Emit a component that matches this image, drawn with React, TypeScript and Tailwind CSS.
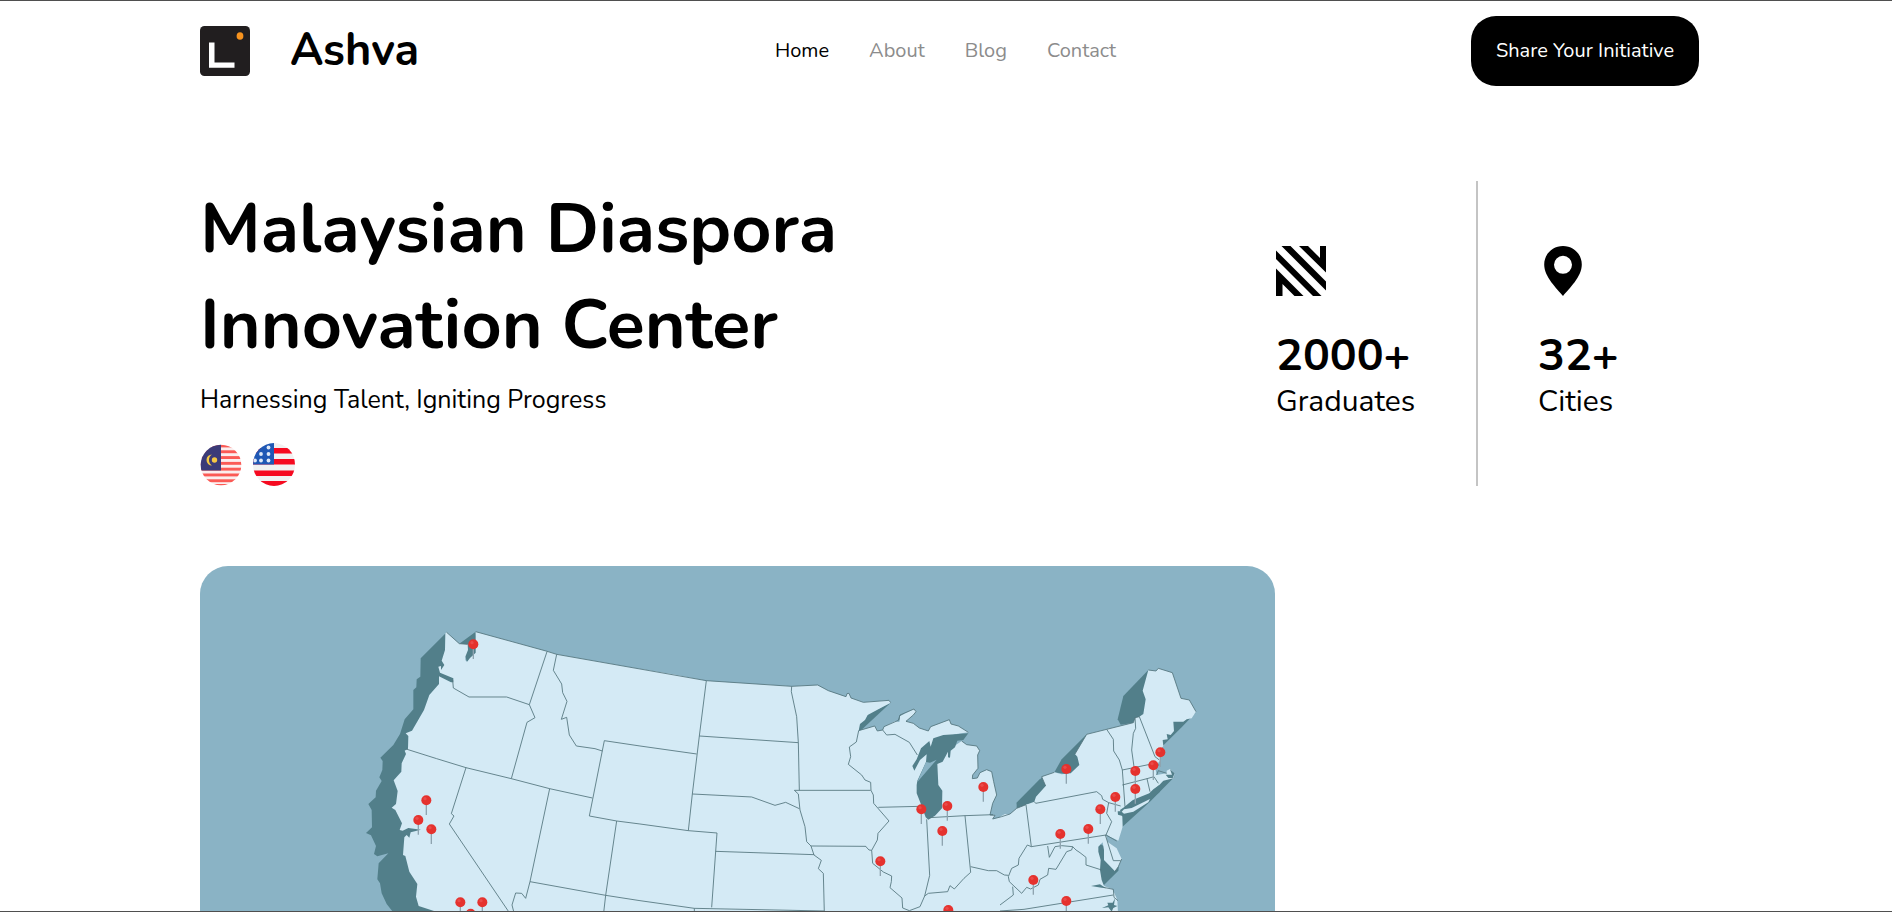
import React from "react";

type Group = {
  origin: string;
  shadow: string[];
  land: string[];
  water: string[];
  lines: string[];
  pins: [number, number][];
};

const west: Group = {
  origin: "translate(140 34) scale(0.33333)",
  shadow: [
    "320,97 242,175 241,230 230,238 229,262 220,270 220,328 194,358 180,402 160,435 121,473 128,483 127,510 118,532 125,543 108,572 107,592 85,612 95,630 96,682 78,699 93,706 108,738 102,762 112,769 145,760 116,790 112,838 120,850 125,880 140,912 162,940 320,940 320,700 300,400 345,260 345,150",
    "407,95 358,131 376,170 381,186 412,160",
  ],
  land: [
    "320,97 358,131 383,133 384,150 376,170 376,180 381,186 390,174 407,158 407,95 618,153 650,163 966,218 966,940 290,940 282,933 236,918 228,890 232,852 208,815 196,768 189,765 193,712 200,705 208,713 212,697 243,689 205,684 188,692 179,690 186,670 166,630 155,623 168,612 173,573 161,541 184,515 185,490 198,462 194,452 204,446 205,408 197,400 216,392 252,330 268,285 297,252 297,229 333,247 340,247 340,235 300,218 295,200 303,198 303,210 313,195 305,182 315,150 316,100",
  ],
  water: [],
  lines: [
    "338,240 340,264 387,291 500,291 568,314",
    "621,155 568,314 585,353 561,367 514,536",
    "198,447 290,476 378,503 514,536 629,566 757,594",
    "650,163 640,211 665,252 668,278 681,304 664,358 680,352 688,405 709,438 765,446 787,453",
    "900,438 793,422 748,648 830,663 900,672",
    "378,503 334,641 342,648 328,672 508,938",
    "629,566 570,845 557,895 545,880 527,879 516,915 522,938",
    "570,845 797,886 900,902",
    "830,663 797,886 791,938",
    "320,97 358,131 383,133",
    "407,95 618,153 650,163 900,207",
  ],
  pins: [[400, 133], [259, 601], [235, 660], [274, 688], [361, 907], [427, 907], [392, 941]],
};

const central: Group = {
  origin: "translate(440 54) scale(0.33333)",
  shadow: [],
  land: [
    "0,147 100,163 199,182 455,199 533,195 565,212 600,225 600,880 0,880",
  ],
  water: [],
  lines: [
    "0,147 199,182 455,199 533,195 565,212",
    "199,182 178,348 157,522 145,632",
    "455,199 454,215 470,290 475,368 478,511",
    "178,348 475,368",
    "0,378 170,402",
    "157,522 335,531 405,556 437,547 478,566",
    "692,511 463,511 475,522 480,570 495,620 500,665 513,678 522,705 544,721 535,746 550,760 553,880",
    "513,678 677,679",
    "227,694 522,704",
    "0,612 145,632 231,639 215,862",
    "0,842 163,865 553,873",
    "163,865 163,880",
  ],
  pins: [],
};

const lakes: Group = {
  origin: "translate(620 94) scale(0.33333)",
  shadow: ["212,128 143,162 116,190 116,214 124,210", "235,181 240,165 255,162 262,185", "660,357 590,428 590,448 660,440"],
  land: [
    "0,82 30,95 78,110 81,101 87,100 93,114 130,127 207,121 212,128 175,148 143,165 135,180 120,192 116,212 164,198 172,213 188,210 192,200 225,184 238,186 240,168 282,147 288,155 280,165 258,184 280,190 298,204 325,213 332,200 388,179 393,192 415,198 445,217 404,223 370,240 400,260 425,243 440,254 470,258 479,272 473,285 474,325 458,345 457,356 472,354 480,338 500,329 515,335 521,365 530,405 518,430 510,465 525,466 518,477 545,470 570,462 590,445 618,434 700,420 700,762 0,762",
  ],
  water: [
    "340,235 370,225 404,223 445,220 430,240 412,242 405,262 392,272 390,293 384,292 384,275 368,305 352,312 355,375 367,392 366,445 345,467 325,479 317,472 300,425 290,400 290,375 292,362 318,306 320,283 300,300 283,332 277,318 290,298 303,265 328,243 332,260",
  ],
  lines: [
    "25,92 78,110 81,101 87,100 93,114 130,127 207,121 212,128",
    "116,212 164,198 172,213 188,210 192,200 235,181 240,165 282,147 288,155 280,165 258,184 280,190 298,204 325,213 332,200 388,179 393,192 415,198 445,217",
    "425,243 440,254 470,258 479,272 473,285 474,325 458,345 457,356 472,354 480,338 500,329 515,335 521,365 530,405 518,430 510,465 525,466 518,477 545,470 570,462 590,445 618,434",
    "188,210 200,225 225,223 268,247 292,285",
    "116,212 109,246 88,261 92,290 85,313 125,345 135,360 152,367 153,391 160,405 161,430 207,483 174,520 172,540 155,571 158,610 190,636 215,648 214,665 210,683 246,714 248,744 268,752 300,740 314,708",
    "175,442 300,439",
    "136,558 147,570 155,571",
    "320,478 329,646 314,708 325,700 383,695 390,677 403,687 432,655 452,637 435,467",
    "328,473 435,467 519,464",
    "452,620 505,632 530,632 553,645 565,646",
  ],
  pins: [[490, 381], [382, 438], [304, 448], [367, 513], [181, 604], [385, 750]],
};

const east: Group = {
  origin: "translate(800 84) scale(0.33333)",
  shadow: [
    "445,60 370,138 353,208 362,224 400,218 440,190",
    "260,253 185,328 163,367 215,375 245,345",
    "130,378 50,458 52,470 78,466 110,458 142,408",
    "588,187 545,232 488,288 480,330 480,270 515,212",
    "524,380 450,455 370,528 340,560 350,480 440,425 500,385",
    "298,580 290,600 298,700 312,705 355,662 360,620",
  ],
  land: [
    "0,500 15,492 35,495 78,464 103,455 108,440 137,408 125,380 163,367 185,373 212,370 238,345 232,320 225,312 260,253 320,238 400,218 405,203 418,200 430,192 437,148 428,122 445,60 468,63 475,55 517,68 543,145 568,150 588,185 575,205 560,208 550,215 520,215 522,243 512,255 500,252 503,268 488,270 490,288 475,310 482,330 465,350 470,375 500,370 500,362 510,357 524,370 520,385 490,392 478,405 460,418 448,430 398,450 372,472 360,480 367,500 368,530 355,572 330,560 318,553 322,575 350,595 365,627 355,650 345,664 336,655 312,630 312,600 308,577 295,590 295,605 302,630 300,660 305,690 312,708 338,718 352,750 354,790 0,790",
  ],
  water: [
    "510,358 524,370 518,384 505,384 497,374 516,374",
    "372,472 398,458 440,440 450,430 478,405 480,425 450,450 400,470",
    "353,484 367,484 368,498 354,494",
    "273,708 300,703 318,715 305,713",
    "306,774 325,766 322,758 338,758 345,745 342,765 352,768 340,774 335,785 325,772",
  ],
  lines: [
    "137,408 125,380 163,367",
    "225,312 260,253 320,238 400,218 405,203 418,200",
    "445,60 468,63 475,55 517,68 543,145 568,150 588,185",
    "78,464 94,590 318,555",
    "103,455 107,460 290,425 305,437 308,448 326,458 320,490 335,515 318,555 350,573",
    "320,238 340,268 341,303 358,330 367,360 375,470",
    "326,458 362,468",
    "405,203 407,235 400,250 395,300 402,350",
    "367,360 450,343 478,345",
    "418,200 465,320 478,330",
    "367,405 441,386 462,380 475,400",
    "441,386 450,425",
    "316,555 340,632 362,632",
    "94,590 82,585 57,625 55,645 35,655 25,680 28,695 65,730 80,712 92,717 115,705 120,688 143,675 146,655 168,658 200,605 215,600 218,590",
    "143,588 148,622 165,590 185,587 218,590 228,600 240,608 258,622 258,645 305,660",
    "38,710 40,735 0,765",
    "0,783 72,778 340,735",
    "310,712 340,718 342,742 354,752",
    "365,627 355,650 345,664",
    "470,375 475,362 500,370",
  ],
  pins: [[481, 307], [460, 346], [406, 363], [406, 417], [199, 357], [346, 441], [301, 478], [265, 537], [181, 552], [100, 690], [199, 753]],
};

const groups = [west, central, lakes, east];

function UsMap() {
  return (
    <svg viewBox="0 0 1075 345" className="block h-[345px] w-[1075px]">
      {groups.map((g, i) => (
        <g key={i} transform={g.origin} fill="#527f8a">
          {g.shadow.map((p) => <polygon key={p} points={p} />)}
        </g>
      ))}
      {groups.map((g, i) => (
        <g key={i} transform={g.origin} fill="#d4eaf5">
          {g.land.map((p) => <polygon key={p} points={p} />)}
        </g>
      ))}
      {groups.map((g, i) => (
        <g key={i} transform={g.origin}>
          {g.water.map((p) => <polygon key={p} points={p} fill="#527f8a" />)}
        </g>
      ))}
      <polygon transform={lakes.origin} points="292,366 318,306 330,308 350,299" fill="#8ab3c5" />
      <polygon transform={east.origin} points="365,485 372,478 395,474 450,447 445,457 400,485 372,491" fill="#d4eaf5" />
      {groups.map((g, i) => (
        <g key={i} transform={g.origin} fill="none" stroke="#54757d" strokeWidth="2.6" strokeLinejoin="round">
          {g.lines.map((p) => <polyline key={p} points={p} />)}
        </g>
      ))}
      {groups.map((g, i) => (
        <g key={i} transform={g.origin}>
          {g.pins.map(([x, y]) => (
            <g key={`${x}-${y}`}>
              <path d={`M${x} ${y}v44`} stroke="#8fa4b0" strokeWidth="4" />
              <circle cx={x} cy={y} r="15" fill="#e5322e" />
              <circle cx={x - 4} cy={y - 5} r="5" fill="#ea4a49" />
            </g>
          ))}
        </g>
      ))}
    </svg>
  );
}

function Logo() {
  return (
    <svg viewBox="0 0 50 50" className="size-[50px]">
      <rect width="50" height="50" rx="4.5" fill="#211e1f" />
      <path d="M9 16.500h5.500v20h20v5.300H9z" fill="#fff" />
      <ellipse cx="40" cy="10" rx="3.400" ry="3.800" fill="#f7931e" />
    </svg>
  );
}

function MalaysiaFlag() {
  return (
    <svg viewBox="0 0 42 42" className="size-[42px]">
      <clipPath id="my"><circle cx="21" cy="21" r="20.300" /></clipPath>
      <g clipPath="url(#my)">
        <rect width="42" height="42" fill="#fbeeee" />
        {[0.5, 6.3, 12.1, 17.9, 23.7, 29.5, 35.3, 40].map((y) => (
          <rect key={y} y={y} width="42" height="2.9" fill="#fb5a55" />
        ))}
        <rect width="21" height="26.500" fill="#3b3b78" />
        <path d="M12 10.500a5.500 5.500 0 1 0 0 11a6.500 6.500 0 0 1 0-11z" fill="#f6c844" />
        <circle cx="14.500" cy="16" r="2.700" fill="#f6c844" />
      </g>
    </svg>
  );
}

function UsFlag() {
  return (
    <svg viewBox="0 0 42 43" className="h-[43px] w-[42px]">
      <clipPath id="us"><ellipse cx="21" cy="21.500" rx="21" ry="21.500" /></clipPath>
      <g clipPath="url(#us)">
        <rect width="42" height="43" fill="#f1f1f1" />
        {[5, 16, 27.5, 38].map((y) => (
          <rect key={y} y={y} width="42" height="5.500" fill="#f60a20" />
        ))}
        <rect width="21" height="21.500" fill="#1f58b5" />
        {[[15.5, 4.5], [8, 11], [15.5, 11], [2, 17.5], [8, 17.5], [15.5, 17.5]].map(([x, y]) => (
          <circle key={`${x}-${y}`} cx={x} cy={y} r="1.900" fill="#dfe9f7" />
        ))}
      </g>
    </svg>
  );
}

function StripesIcon() {
  return (
    <svg viewBox="0 0 50 50" className="size-[50px]">
      <path d="M0 4.500L45.500 50H37L0 13zM5.500 0H14.500L50 35.500V44.500zM23 0H32L44 12V0h6v26.500zM0 22.500L27.500 50H18.500L6.500 38V50H0z" fill="#000" />
    </svg>
  );
}

function PinIcon() {
  return (
    <svg viewBox="0 0 50 50" className="size-[50px]">
      <path fillRule="evenodd" d="M25 0C14.500 0 6.200 8.200 6.200 18.500C6.200 31 19 42.500 25 50C31 42.500 43.800 31 43.800 18.500C43.800 8.200 35.500 0 25 0zM25 9.800a9 9 0 1 1 0 18a9 9 0 0 1 0-18z" fill="#000" />
    </svg>
  );
}

export default function App() {
  return (
    <div className="flex h-[912px] w-full flex-col overflow-hidden border-y border-[#4f4f4f] bg-white pl-[200px] font-['Nunito','Open_Sans',sans-serif] text-black">
      <div className="flex w-[1500px] flex-1 flex-col">
        <header className="mt-[15px] flex h-[70px] w-[1499px] shrink-0 items-center justify-between">
          <div className="flex w-[575px] items-center gap-10">
            <Logo />
            <span className="text-[45px] leading-[60px] font-bold">Ashva</span>
          </div>
          <nav className="mb-[2px] flex flex-1 gap-10 text-[20px] leading-[27px] text-[#8c8c8c]">
            <a className="text-black">Home</a>
            <a>About</a>
            <a>Blog</a>
            <a>Contact</a>
          </nav>
          <button className="h-[70px] w-[228px] rounded-[25px] bg-black text-[20px] whitespace-nowrap text-white">Share Your Initiative</button>
        </header>

        <section className="mt-[95px] flex h-[305px] shrink-0 justify-between">
          <div className="flex flex-col">
            <h1 className="text-[70px] leading-[96px] font-bold whitespace-nowrap">
              Malaysian Diaspora
              <br />
              Innovation Center
            </h1>
            <p className="mt-[10px] text-[25px] leading-[35px] whitespace-nowrap">Harnessing Talent, Igniting Progress</p>
            <div className="mt-[25px] flex items-center gap-[11px]">
              <MalaysiaFlag />
              <UsFlag />
            </div>
          </div>
          <div className="flex w-[424px]">
            <div className="flex w-[202px] flex-col border-r-2 border-[#c4c4c4] pt-[65px]">
              <StripesIcon />
              <strong className="mt-[37px] text-[44.8px] leading-[46px] font-bold">2000+</strong>
              <span className="mt-[2px] text-[30px] leading-[41px]">Graduates</span>
            </div>
            <div className="flex flex-col pt-[65px] pl-[60px]">
              <PinIcon />
              <strong className="mt-[37px] text-[44.8px] leading-[46px] font-bold">32+</strong>
              <span className="mt-[2px] text-[30px] leading-[41px]">Cities</span>
            </div>
          </div>
        </section>

        <section className="mt-[80px] h-[345px] w-[1075px] shrink-0 overflow-hidden rounded-t-[28px] bg-[#8ab3c5]">
          <UsMap />
        </section>
      </div>
    </div>
  );
}
